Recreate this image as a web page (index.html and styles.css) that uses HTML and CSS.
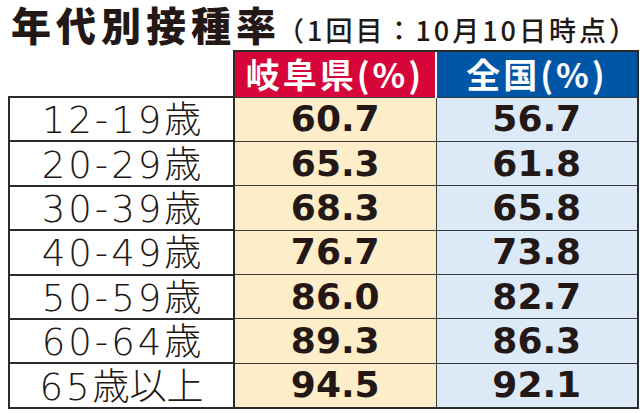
FILE: index.html
```html
<!DOCTYPE html>
<html lang="ja">
<head>
<meta charset="utf-8">
<title>年代別接種率</title>
<link rel="stylesheet" href="styles.css">
</head>
<body>
<div class="page">
  <div class="heading">
    <h1 class="title">年代別接種率</h1>
    <span class="sub">（1回目：10月10日時点）</span>
  </div>
  <table class="rates">
    <thead>
      <tr class="head-row">
        <th class="corner"></th>
        <th class="h-gifu">岐阜県(%)</th>
        <th class="h-all">全国(%)</th>
      </tr>
    </thead>
    <tbody>
      <tr><th class="age">12-19<span class="jp">歳</span></th><td class="gifu">60.7</td><td class="all">56.7</td></tr>
      <tr><th class="age">20-29<span class="jp">歳</span></th><td class="gifu">65.3</td><td class="all">61.8</td></tr>
      <tr><th class="age">30-39<span class="jp">歳</span></th><td class="gifu">68.3</td><td class="all">65.8</td></tr>
      <tr><th class="age">40-49<span class="jp">歳</span></th><td class="gifu">76.7</td><td class="all">73.8</td></tr>
      <tr><th class="age">50-59<span class="jp">歳</span></th><td class="gifu">86.0</td><td class="all">82.7</td></tr>
      <tr><th class="age">60-64<span class="jp">歳</span></th><td class="gifu">89.3</td><td class="all">86.3</td></tr>
      <tr><th class="age">65<span class="jp">歳以上</span></th><td class="gifu">94.5</td><td class="all">92.1</td></tr>
    </tbody>
  </table>
</div>
</body>
</html>
```

FILE: styles.css
```css
html, body {
  margin: 0;
  padding: 0;
  background: #ffffff;
}
.page {
  width: 640px;
  height: 413px;
  overflow: hidden;
  color: #231815;
  font-family: "Noto Sans CJK JP", "Noto Sans", sans-serif;
}
.heading {
  display: flex;
  align-items: baseline;
  height: 50px;
  padding-left: 11px;
  box-sizing: border-box;
  white-space: nowrap;
}
.title {
  flex: none;
  margin: 0;
  font-size: 40px;
  line-height: 48px;
  font-weight: 900;
  letter-spacing: 5px;
  white-space: nowrap;
}
.sub {
  flex: none;
  font-size: 27px;
  font-weight: 500;
  letter-spacing: 3px;
  margin-left: -4px;
  white-space: nowrap;
}
.rates {
  margin-left: 8px;
  border-collapse: collapse;
  table-layout: fixed;
  width: 624px;
}
.rates th, .rates td {
  padding: 0;
  text-align: center;
  vertical-align: middle;
  line-height: 30px;
}
.corner {
  width: 224px;
  border: none;
  background: #ffffff;
}
.head-row {
  height: 46px;
}
.h-gifu, .h-all {
  width: 200px;
  color: #ffffff;
  font-size: 34px;
  font-weight: 700;
  letter-spacing: 3px;
  border-top: 2px solid #2a2a2a;
}
.h-gifu {
  background: #d7063a;
  border-left: 2px solid #2a2a2a;
}
.h-all {
  background: #0056a6;
  border-left: 2px solid #ffffff;
  border-right: 2px solid #2a2a2a;
}
.rates tbody tr {
  height: 44.4px;
}
.rates tbody tr:last-child th,
.rates tbody tr:last-child td {
  border-bottom: 2px solid #2a2a2a;
}
.age {
  font-family: "DejaVu Sans", "Noto Sans CJK JP", sans-serif;
  font-weight: 200;
  font-size: 37px;
  letter-spacing: 3px;
  background: #ffffff;
  border-top: 2px solid #2a2a2a;
  border-left: 2px solid #2a2a2a;
  border-right: 2px solid #2a2a2a;
}
.jp {
  font-family: "Noto Sans CJK JP", sans-serif;
  font-weight: 300;
  letter-spacing: 0;
  line-height: 30px;
}
.gifu, .all {
  font-family: "DejaVu Sans", sans-serif;
  font-weight: 700;
  font-size: 36px;
  border-top: 1.5px solid #3a3a3a;
}
.gifu {
  background: #fdedc8;
  border-right: 1px solid #3a3a3a;
}
.all {
  background: #dce9f7;
  border-right: 2px solid #2a2a2a;
}
```
